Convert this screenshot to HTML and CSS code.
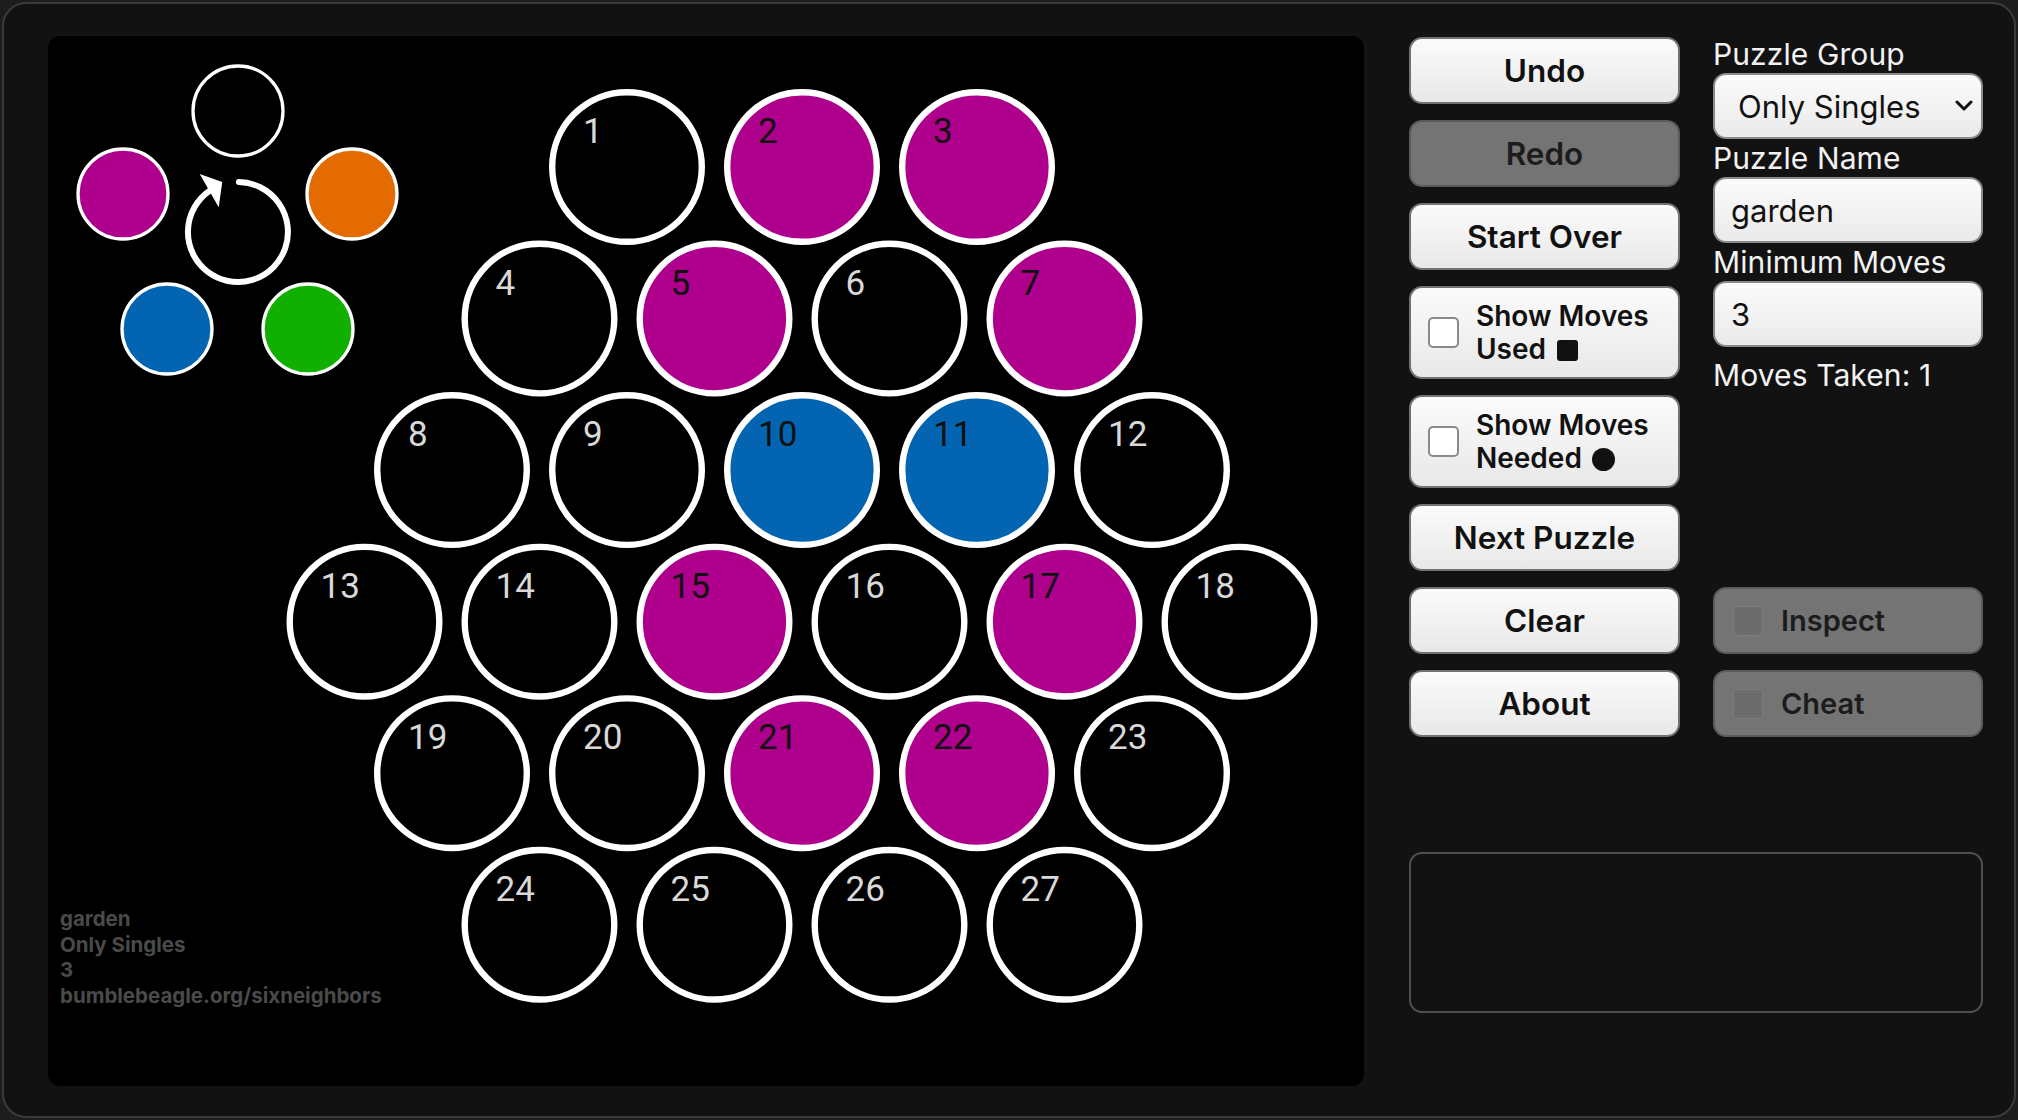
FILE: index.html
```html
<!DOCTYPE html>
<html>
<head>
<meta charset="utf-8">
<title>Six Neighbors</title>
<link rel="stylesheet" href="styles.css">
</head>
<body>
<div class="frame">
  <div class="board">
    <svg class="canvas" width="1316" height="1050" viewBox="0 0 1316 1050">
      <g class="palette">
        <circle class="pc" cx="190" cy="75" r="45" fill="#000"/>
        <circle class="pc" cx="75" cy="158" r="45" fill="#ae008c"/>
        <circle class="pc" cx="304" cy="158" r="45" fill="#e46a02"/>
        <circle class="pc" cx="119" cy="293" r="45" fill="#0364b1"/>
        <circle class="pc" cx="260" cy="293" r="45" fill="#11b000"/>
        <path class="rot" d="M 190.9 146 A 50 50 0 1 1 161.3 155"/>
        <polygon fill="#fff" points="151.7,138 174.3,146 170.7,171.3"/>
      </g>
      <g class="cells">
        <g transform="translate(579,131)"><circle r="74.8"/><text x="-44" y="-24">1</text></g>
        <g class="m" transform="translate(754,131)"><circle r="74.8"/><text x="-44" y="-24">2</text></g>
        <g class="m" transform="translate(929,131)"><circle r="74.8"/><text x="-44" y="-24">3</text></g>

        <g transform="translate(491.5,282.55)"><circle r="74.8"/><text x="-44" y="-24">4</text></g>
        <g class="m" transform="translate(666.5,282.55)"><circle r="74.8"/><text x="-44" y="-24">5</text></g>
        <g transform="translate(841.5,282.55)"><circle r="74.8"/><text x="-44" y="-24">6</text></g>
        <g class="m" transform="translate(1016.5,282.55)"><circle r="74.8"/><text x="-44" y="-24">7</text></g>

        <g transform="translate(404,434.1)"><circle r="74.8"/><text x="-44" y="-24">8</text></g>
        <g transform="translate(579,434.1)"><circle r="74.8"/><text x="-44" y="-24">9</text></g>
        <g class="b" transform="translate(754,434.1)"><circle r="74.8"/><text x="-44" y="-24">10</text></g>
        <g class="b" transform="translate(929,434.1)"><circle r="74.8"/><text x="-44" y="-24">11</text></g>
        <g transform="translate(1104,434.1)"><circle r="74.8"/><text x="-44" y="-24">12</text></g>

        <g transform="translate(316.5,585.65)"><circle r="74.8"/><text x="-44" y="-24">13</text></g>
        <g transform="translate(491.5,585.65)"><circle r="74.8"/><text x="-44" y="-24">14</text></g>
        <g class="m" transform="translate(666.5,585.65)"><circle r="74.8"/><text x="-44" y="-24">15</text></g>
        <g transform="translate(841.5,585.65)"><circle r="74.8"/><text x="-44" y="-24">16</text></g>
        <g class="m" transform="translate(1016.5,585.65)"><circle r="74.8"/><text x="-44" y="-24">17</text></g>
        <g transform="translate(1191.5,585.65)"><circle r="74.8"/><text x="-44" y="-24">18</text></g>

        <g transform="translate(404,737.2)"><circle r="74.8"/><text x="-44" y="-24">19</text></g>
        <g transform="translate(579,737.2)"><circle r="74.8"/><text x="-44" y="-24">20</text></g>
        <g class="m" transform="translate(754,737.2)"><circle r="74.8"/><text x="-44" y="-24">21</text></g>
        <g class="m" transform="translate(929,737.2)"><circle r="74.8"/><text x="-44" y="-24">22</text></g>
        <g transform="translate(1104,737.2)"><circle r="74.8"/><text x="-44" y="-24">23</text></g>

        <g transform="translate(491.5,888.75)"><circle r="74.8"/><text x="-44" y="-24">24</text></g>
        <g transform="translate(666.5,888.75)"><circle r="74.8"/><text x="-44" y="-24">25</text></g>
        <g transform="translate(841.5,888.75)"><circle r="74.8"/><text x="-44" y="-24">26</text></g>
        <g transform="translate(1016.5,888.75)"><circle r="74.8"/><text x="-44" y="-24">27</text></g>
      </g>
    </svg>
    <div class="info">
      <div>garden</div>
      <div>Only Singles</div>
      <div>3</div>
      <div>bumblebeagle.org/sixneighbors</div>
    </div>
  </div>

  <div class="panel">
    <div class="top">
      <div class="btncol">
        <button class="btn">Undo</button>
        <button class="btn off">Redo</button>
        <button class="btn">Start Over</button>
        <label class="btn check"><span class="box"></span><span class="ctext">Show Moves<br>Used <span class="sq"></span></span></label>
        <label class="btn check"><span class="box"></span><span class="ctext">Show Moves<br>Needed <span class="dot"></span></span></label>
        <button class="btn">Next Puzzle</button>
      </div>
      <div class="form">
        <div class="flabel">Puzzle Group</div>
        <div class="field select"><span>Only Singles</span><svg class="chev" width="18" height="12" viewBox="0 0 18 12"><polyline points="2,2 9,9 16,2"/></svg></div>
        <div class="flabel">Puzzle Name</div>
        <div class="field">garden</div>
        <div class="flabel">Minimum Moves</div>
        <div class="field">3</div>
        <div class="flabel taken">Moves Taken: 1</div>
      </div>
    </div>
    <div class="row">
      <button class="btn">Clear</button>
      <label class="btn opt off"><span class="fbox"></span><span>Inspect</span></label>
    </div>
    <div class="row">
      <button class="btn">About</button>
      <label class="btn opt off"><span class="fbox"></span><span>Cheat</span></label>
    </div>
    <div class="msg"></div>
  </div>
</div>
</body>
</html>
```
FILE: styles.css
```css
html, body {
  margin: 0;
  background: #1d1d1d;
  font-family: "Inter", "Noto Sans", sans-serif;
}

.frame {
  box-sizing: border-box;
  margin: 2px;
  height: 1116px;
  border: 2px solid #3b3b3b;
  border-radius: 24px;
  background: #121212;
  display: flex;
  gap: 45px;
  padding: 32px 0 0 44px;
}

.board {
  position: relative;
  flex: none;
  width: 1316px;
  height: 1050px;
  background: #000;
  border-radius: 12px;
  overflow: hidden;
}

.canvas {
  display: block;
}

.pc {
  stroke: #fff;
  stroke-width: 3.3;
}

.rot {
  fill: none;
  stroke: #fff;
  stroke-width: 6;
  stroke-linecap: round;
}

.cells circle {
  fill: #000;
  stroke: #fff;
  stroke-width: 6.4;
}

.cells text {
  font-family: "Roboto", "Inter", sans-serif;
  font-size: 35px;
  fill: #d9d9d9;
}

.cells .m circle {
  fill: #ae008c;
}

.cells .b circle {
  fill: #0364b1;
}

.cells .m text,
.cells .b text {
  fill: #111;
}

.info {
  position: absolute;
  left: 12px;
  top: 870px;
  font-size: 20.5px;
  font-weight: 700;
  line-height: 25.7px;
  color: #4a4a4a;
}

.panel {
  flex: none;
  width: 574px;
  display: flex;
  flex-direction: column;
  padding-top: 1px;
}

.top {
  display: flex;
  gap: 33px;
}

.btncol {
  width: 271px;
  display: flex;
  flex-direction: column;
  gap: 16px;
}

.btn {
  box-sizing: border-box;
  height: 67px;
  margin: 0;
  padding: 0;
  border: 2px solid #727272;
  border-radius: 13px;
  background: linear-gradient(#fbfbfb, #e8e8e8);
  font-family: "Inter", "Noto Sans", sans-serif;
  font-size: 31.5px;
  font-weight: 600;
  color: #111;
  display: flex;
  align-items: center;
  justify-content: center;
}

.btn.off {
  background: #747474;
  border-color: #5a5a5a;
  color: #1c1c1c;
}

.btn.check {
  height: 93px;
  justify-content: flex-start;
  padding-left: 17px;
  gap: 17px;
  font-size: 28px;
  line-height: 33px;
}

.box {
  flex: none;
  box-sizing: border-box;
  width: 31px;
  height: 31px;
  border: 2px solid #8a8a8a;
  border-radius: 5px;
  background: #fff;
}

.sq {
  display: inline-block;
  width: 21px;
  height: 21px;
  margin-left: 4px;
  border-radius: 3px;
  background: #111;
  vertical-align: -2px;
}

.dot {
  display: inline-block;
  width: 23px;
  height: 23px;
  margin-left: 3px;
  border-radius: 50%;
  background: #111;
  vertical-align: -3px;
}

.form {
  width: 270px;
  display: flex;
  flex-direction: column;
  margin-top: -2px;
}

.flabel {
  height: 38px;
  font-size: 30px;
  letter-spacing: 0.1px;
  line-height: 38px;
  color: #f2f2f2;
  white-space: nowrap;
}

.taken {
  margin-top: 9px;
}

.field {
  box-sizing: border-box;
  height: 66px;
  border: 2px solid #8a8a8a;
  border-radius: 13px;
  background: linear-gradient(#fbfbfb, #eaeaea);
  font-size: 31px;
  color: #111;
  display: flex;
  align-items: center;
  padding: 0 16px;
}

.select {
  justify-content: space-between;
  padding: 0 8px 0 23px;
}

.chev polyline {
  fill: none;
  stroke: #111;
  stroke-width: 3;
  stroke-linecap: round;
  stroke-linejoin: round;
}

.row {
  display: flex;
  gap: 33px;
  margin-top: 16px;
}

.row > .btn {
  width: 271px;
}

.row > .btn.opt {
  width: 270px;
  justify-content: flex-start;
  padding-left: 18px;
  gap: 18px;
  font-size: 29px;
}

.fbox {
  flex: none;
  box-sizing: border-box;
  width: 30px;
  height: 30px;
  border: 1px solid #7c7c7c;
  border-radius: 5px;
  background: #6c6c6c;
}

.msg {
  box-sizing: border-box;
  margin-top: 115px;
  height: 161px;
  border: 2px solid #4f4f4f;
  border-radius: 13px;
}
```
